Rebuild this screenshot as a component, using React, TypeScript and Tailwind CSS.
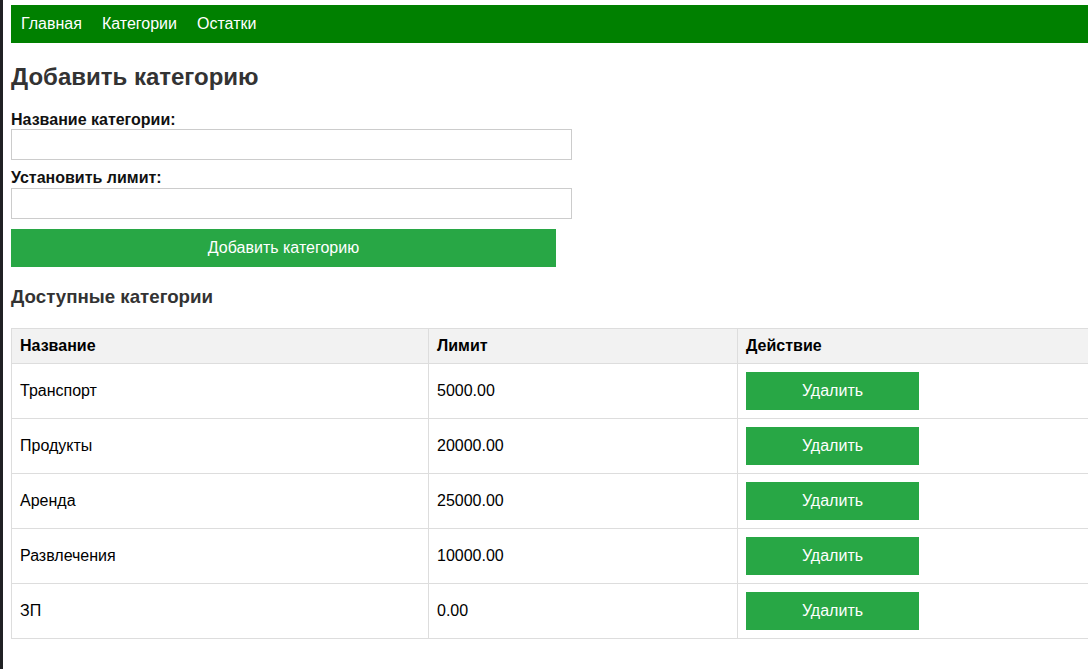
import React from 'react'

const categories = [
  { name: 'Транспорт', limit: '5000.00' },
  { name: 'Продукты', limit: '20000.00' },
  { name: 'Аренда', limit: '25000.00' },
  { name: 'Развлечения', limit: '10000.00' },
  { name: 'ЗП', limit: '0.00' },
]

const navLinks = ['Главная', 'Категории', 'Остатки']

const App: React.FC = () => {
  return (
    <div className="flex h-[669px] w-[1088px] overflow-hidden bg-white font-['Liberation_Sans',Arial,sans-serif]">
      <div className="w-[3px] shrink-0 bg-[#202124]" />

      <div className="min-w-0 flex-1 pl-2 pt-[5px]">
        <nav className="flex h-[38px] items-center bg-[#008000] text-base text-white">
          {navLinks.map((link) => (
            <a key={link} href="#" className="px-[10px] leading-[18px]">
              {link}
            </a>
          ))}
        </nav>

        <h2 className="mt-5 text-2xl font-bold leading-[28px] text-[#333]">
          Добавить категорию
        </h2>

        <form className="mt-5 w-[561px]" onSubmit={(e) => e.preventDefault()}>
          <label className="block text-base font-bold leading-[18px] text-[#111]">
            Название категории:
          </label>
          <input className="block h-[31px] w-[561px] border border-[#ccc] px-2 outline-none" />

          <label className="mt-[9px] block text-base font-bold leading-[18px] text-[#111]">
            Установить лимит:
          </label>
          <input className="mt-px block h-[31px] w-[561px] border border-[#ccc] px-2 outline-none" />

          <button className="mt-[10px] block h-[38px] w-[545px] bg-[#28a745] text-base text-white">
            Добавить категорию
          </button>
        </form>

        <h3 className="mt-[19px] text-[18.72px] font-bold leading-[22px] text-[#333]">
          Доступные категории
        </h3>

        <table className="mt-5 w-[1200px] table-fixed border-collapse text-base text-black">
          <colgroup>
            <col className="w-[417px]" />
            <col className="w-[309px]" />
            <col />
          </colgroup>
          <thead>
            <tr className="bg-[#f2f2f2]">
              <th className="h-[35px] border border-[#ddd] px-2 text-left font-bold">Название</th>
              <th className="h-[35px] border border-[#ddd] px-2 text-left font-bold">Лимит</th>
              <th className="h-[35px] border border-[#ddd] px-2 text-left font-bold">Действие</th>
            </tr>
          </thead>
          <tbody>
            {categories.map((category) => (
              <tr key={category.name}>
                <td className="h-[55px] border border-[#ddd] px-2">{category.name}</td>
                <td className="h-[55px] border border-[#ddd] px-2">{category.limit}</td>
                <td className="h-[55px] border border-[#ddd] px-2">
                  <button className="block h-[38px] w-[173px] bg-[#28a745] text-base text-white">
                    Удалить
                  </button>
                </td>
              </tr>
            ))}
          </tbody>
        </table>
      </div>
    </div>
  )
}

export default App
